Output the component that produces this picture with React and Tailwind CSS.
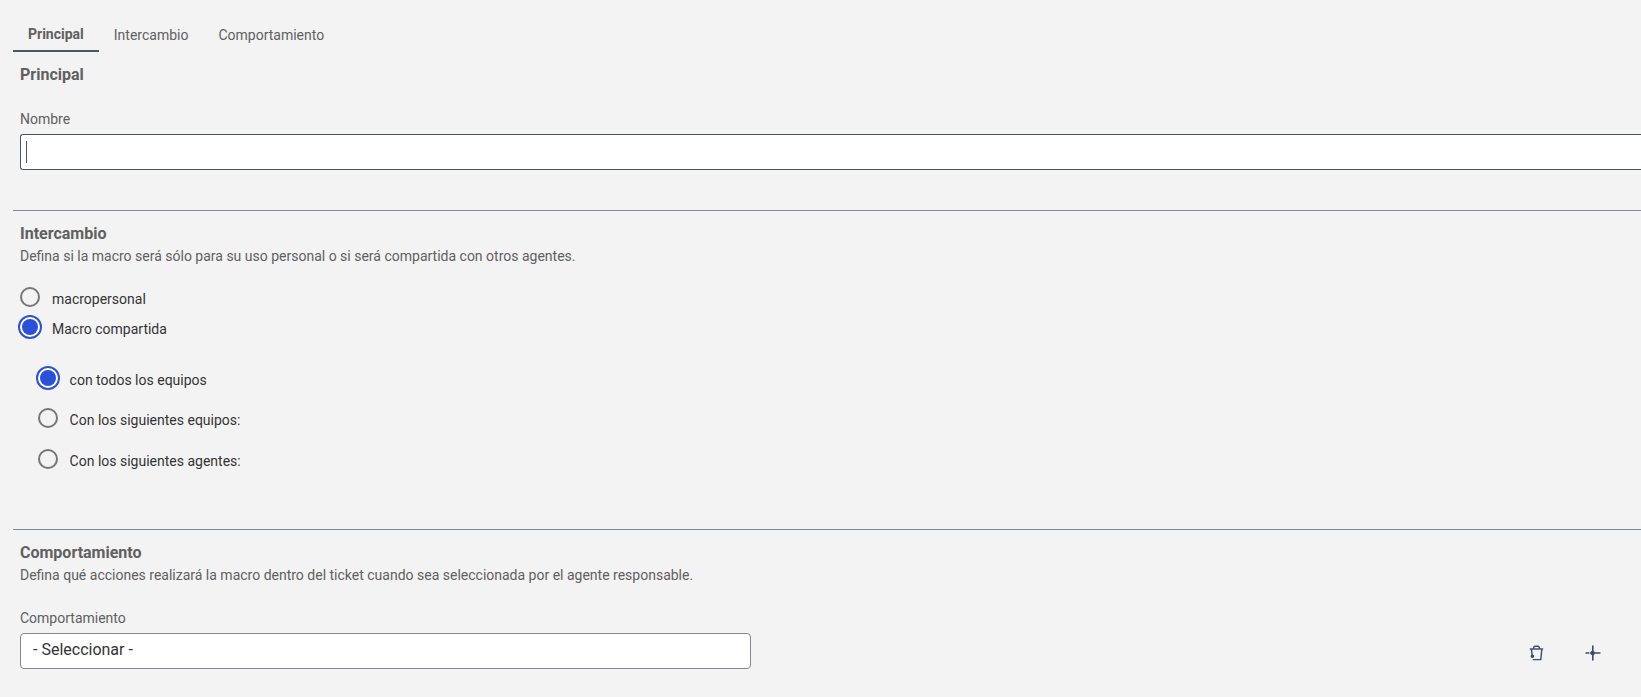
import { useState } from 'react'

const tabs = ['Principal', 'Intercambio', 'Comportamiento']

const TrashIcon = () => (
  <svg width="16" height="18" viewBox="0 0 16 18" fill="none" stroke="#3d4a6b" strokeWidth="1.4">
    <path d="M0.8 5H14.2" />
    <path d="M4.2 4.8L5 2.9Q5.4 2.2 6.2 2.2H8.8Q9.6 2.2 10 2.9L10.8 4.8" />
    <path d="M2.4 5.2L3.2 11.5M12.8 5.2L11.8 15.6H3.8" />
    <circle cx="3.4" cy="12.2" r="1.1" fill="#3d4a6b" />
  </svg>
)

const PlusIcon = () => (
  <svg width="16" height="16" viewBox="0 0 16 16" fill="none" stroke="#3d4a6b" strokeWidth="1.6">
    <path d="M7.8 0.5V15.5M0.5 8H4.4M5.2 8H15.5" />
    <circle cx="7.6" cy="8" r="1.4" fill="#3d4a6b" />
  </svg>
)

const Radio = ({ label, checked, onChange, className }) => (
  <label className={`flex h-6 cursor-pointer ${className}`}>
    <input type="radio" className="sr-only" checked={checked} onChange={onChange} />
    <span className="flex h-6 w-6 shrink-0 items-center justify-center">
      {checked ? (
        <span className="flex h-6 w-6 items-center justify-center rounded-full border-2 border-[#2b50da] bg-white">
          <span className="h-4 w-4 rounded-full bg-[#2b50da]" />
        </span>
      ) : (
        <span className="h-5 w-5 rounded-full border-2 border-[#767676]" />
      )}
    </span>
    <span className="mt-1 leading-5 text-[#333]">{label}</span>
  </label>
)

const App = () => {
  const [activeTab, setActiveTab] = useState('Principal')
  const [name, setName] = useState('')
  const [scope, setScope] = useState('shared')
  const [target, setTarget] = useState('all')

  return (
    <div className="h-[697px] overflow-hidden bg-[#f3f3f3] pl-[13px] font-['Roboto',sans-serif] text-[14px] leading-5 text-[#606060]">
      <nav className="flex h-[52px] items-end">
        {tabs.map((tab) => (
          <button
            key={tab}
            onClick={() => setActiveTab(tab)}
            className={`border-b-2 px-[15px] ${
              activeTab === tab ? 'border-[#455a69] pb-1.5 font-bold' : 'border-transparent pb-[5px]'
            }`}
          >
            {tab}
          </button>
        ))}
      </nav>

      <section className="pl-[7px] pt-[11px]">
        <h2 className="text-[16px] font-bold leading-6">Principal</h2>
        <label className="mt-[22px] block">Nombre</label>
        <div className="mt-[5px] flex h-9 items-center rounded-l-[3px] border border-r-0 border-[#455a69] bg-white pl-[5px]">
          <span className="h-[22px] w-px bg-[#555]" />
          <input
            value={name}
            onChange={(e) => setName(e.target.value)}
            className="h-full flex-1 outline-none"
          />
        </div>
      </section>

      <section className="mt-10 border-t border-[#78909c] pt-[11px]">
        <div className="pl-[7px]">
          <h2 className="text-[16px] font-bold leading-6">Intercambio</h2>
          <p>Defina si la macro será sólo para su uso personal o si será compartida con otros agentes.</p>
        </div>
        <div className="mt-[19px] pl-[5px]">
          <Radio
            label="macropersonal"
            checked={scope === 'personal'}
            onChange={() => setScope('personal')}
            className="gap-2.5"
          />
          <Radio
            label="Macro compartida"
            checked={scope === 'shared'}
            onChange={() => setScope('shared')}
            className="mt-1.5 gap-2.5"
          />
        </div>
        <div className="mt-[27px] pl-[23px]">
          <Radio
            label="con todos los equipos"
            checked={target === 'all'}
            onChange={() => setTarget('all')}
            className="gap-[9.6px]"
          />
          <Radio
            label="Con los siguientes equipos:"
            checked={target === 'teams'}
            onChange={() => setTarget('teams')}
            className="mt-4 gap-[9.6px]"
          />
          <Radio
            label="Con los siguientes agentes:"
            checked={target === 'agents'}
            onChange={() => setTarget('agents')}
            className="mt-[17px] gap-[9.6px]"
          />
        </div>
      </section>

      <section className="mt-[58px] border-t border-[#7b8a99] pt-[11px]">
        <div className="pl-[7px]">
          <h2 className="text-[16px] font-bold leading-6">Comportamiento</h2>
          <p>Defina qué acciones realizará la macro dentro del ticket cuando sea seleccionada por el agente responsable.</p>
          <label className="mt-[23px] block">Comportamiento</label>
          <div className="mt-[5px] flex items-start">
            <button className="h-9 w-[731px] rounded-[4px] border border-[#858791] bg-white pb-0.5 pl-3 text-left text-[16px] leading-5 text-[#333]">
              - Seleccionar -
            </button>
            <div className="ml-auto mt-[11px] flex items-center gap-10 pr-10">
              <button title="Eliminar">
                <TrashIcon />
              </button>
              <button title="Agregar">
                <PlusIcon />
              </button>
            </div>
          </div>
        </div>
      </section>
    </div>
  )
}

export default App
